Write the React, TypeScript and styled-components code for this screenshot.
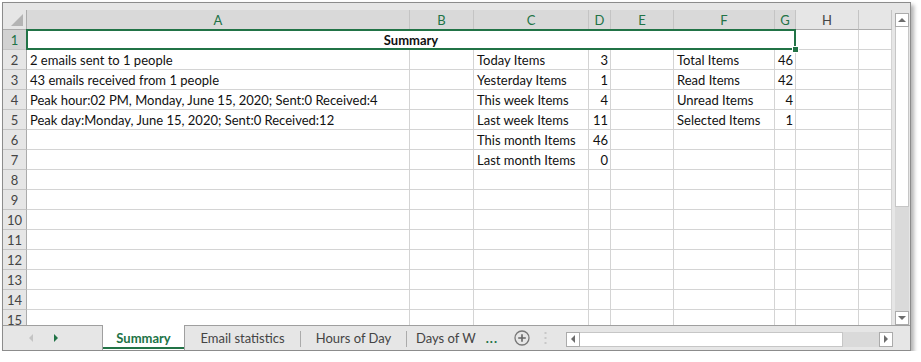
import React from "react";
import styled, { createGlobalStyle, css } from "styled-components";

const Global = createGlobalStyle`
  html, body { margin: 0; padding: 0; background: #ffffff; }
  body { font-family: Lato, "Liberation Sans", sans-serif; }
`;

const GREEN = "#217346";
const COLS = [24, 383, 64, 115, 22, 63, 101, 21, 63, 33];
const LETTERS = ["A", "B", "C", "D", "E", "F", "G", "H", ""];

const Window = styled.div`
  margin: 2px 0 0 2px;
  width: 909px;
  height: 349px;
  box-sizing: border-box;
  border: 1px solid #8c8c8c;
  background: #e6e6e6;
  box-shadow: 3px 3px 4px rgba(0, 0, 0, 0.3);
  display: flex;
  flex-direction: column;
`;

const Main = styled.div`
  display: flex;
  height: 322px;
  overflow: hidden;
`;

const Sheet = styled.div`
  width: 889px;
  display: flex;
  flex-direction: column;
  overflow: hidden;
`;

const Band = styled.div`
  height: 7px;
  flex: none;
  background: #e6e6e6;
`;

const Grid = styled.div`
  display: grid;
  grid-template-columns: ${COLS.map((c) => c + "px").join(" ")};
  grid-template-rows: 20px repeat(15, 20px);
  background: #ffffff;
`;

const Corner = styled.div`
  background: #e6e6e6;
  border-right: 1px solid #ababab;
  border-bottom: 1px solid #ababab;
  box-sizing: border-box;
  display: flex;
  align-items: flex-end;
  justify-content: flex-end;
  padding: 0 3px 3px 0;
`;

const ColHead = styled.div<{ $sel?: boolean }>`
  box-sizing: border-box;
  background: ${(p) => (p.$sel ? "#d9d9d9" : "#e6e6e6")};
  color: ${(p) => (p.$sel ? GREEN : "#444444")};
  border-right: 1px solid #c4c4c4;
  border-bottom: 1px solid #ababab;
  font-size: 13px;
  display: flex;
  align-items: center;
  justify-content: center;
  padding-top: 1px;
`;

const RowHead = styled.div<{ $sel?: boolean }>`
  box-sizing: border-box;
  background: ${(p) => (p.$sel ? "#d2d2d2" : "#e6e6e6")};
  color: ${(p) => (p.$sel ? GREEN : "#444444")};
  border-right: 1px solid #ababab;
  border-bottom: 1px solid #c4c4c4;
  font-size: 13px;
  display: flex;
  align-items: center;
  justify-content: center;
  padding-top: 1px;
`;

const Cell = styled.div<{ $right?: boolean }>`
  box-sizing: border-box;
  border-right: 1px solid #d4d4d4;
  border-bottom: 1px solid #d4d4d4;
  font-size: 13px;
  color: #111111;
  display: flex;
  align-items: center;
  white-space: nowrap;
  padding: 1px 3px 0 3px;
  ${(p) =>
    p.$right &&
    css`
      justify-content: flex-end;
      padding-right: 2px;
    `}
`;

const Merged = styled.div`
  grid-column: 2 / span 7;
  position: relative;
  box-sizing: border-box;
  border-bottom: 1px solid #d4d4d4;
  border-right: 1px solid #d4d4d4;
  font-size: 13px;
  font-weight: 700;
  color: #111111;
  display: flex;
  align-items: center;
  justify-content: center;
  padding-top: 1px;
  &::after {
    content: "";
    position: absolute;
    left: -1px;
    top: -1px;
    right: -1px;
    bottom: -1px;
    border: 2px solid ${GREEN};
  }
`;

const Handle = styled.span`
  position: absolute;
  right: -4px;
  bottom: -4px;
  width: 5px;
  height: 5px;
  background: ${GREEN};
  border: 1px solid #ffffff;
  z-index: 2;
`;

const VScroll = styled.div`
  width: 17px;
  display: flex;
  flex-direction: column;
  padding: 10px 0 0 3px;
  box-sizing: border-box;
`;

const ScrollBtn = styled.div<{ $h?: number }>`
  width: 14px;
  height: ${(p) => p.$h ?? 14}px;
  flex: none;
  box-sizing: border-box;
  border: 1px solid #ababab;
  background: #ffffff;
  display: flex;
  align-items: center;
  justify-content: center;
`;

const VTrack = styled.div`
  flex: 1;
  width: 14px;
  background: #dadada;
  display: flex;
  flex-direction: column;
`;

const VThumb = styled.div`
  height: 180px;
  box-sizing: border-box;
  background: #ffffff;
  border: 1px solid #c6c6c6;
  border-top: none;
`;

const TabBar = styled.div`
  height: 25px;
  box-sizing: border-box;
  border-top: 1px solid #9f9f9f;
  display: flex;
  align-items: stretch;
  font-size: 13px;
  color: #444444;
`;

const Nav = styled.div`
  width: 99px;
  display: flex;
  align-items: center;
  padding-left: 26px;
  gap: 21px;
  box-sizing: border-box;
`;

const Tab = styled.div<{ $active?: boolean; $w: number }>`
  width: ${(p) => p.$w}px;
  box-sizing: border-box;
  display: flex;
  align-items: center;
  justify-content: center;
  white-space: nowrap;
  ${(p) =>
    p.$active &&
    css`
      margin-top: -1px;
      background: #ffffff;
      border-left: 1px solid #9f9f9f;
      border-right: 1px solid #9f9f9f;
      color: ${GREEN};
      font-weight: 700;
      box-shadow: inset 0 -1px 0 #ffffff, inset 0 -3px 0 ${GREEN};
    `}
`;

const Sep = styled.div`
  width: 1px;
  margin: 5px 0 3px;
  background: #ababab;
`;

const More = styled.span`
  color: ${GREEN};
  font-weight: 700;
  margin-left: 10px;
  letter-spacing: 1px;
`;

const Tools = styled.div`
  display: flex;
  align-items: center;
  gap: 14px;
  padding-left: 7px;
  width: 59px;
  box-sizing: border-box;
`;

const HScroll = styled.div`
  width: 327px;
  height: 15px;
  align-self: center;
  margin-top: 2px;
  display: flex;
`;

const HThumb = styled.div`
  width: 263px;
  box-sizing: border-box;
  background: #ffffff;
  border: 1px solid #c6c6c6;
  border-left: none;
`;

const HTrack = styled.div`
  flex: 1;
  background: #dadada;
`;

const Tri = ({ dir, color, size = 4 }: { dir: "up" | "down" | "left" | "right"; color: string; size?: number }) => {
  const s = size;
  const pts =
    dir === "up"
      ? `0,${s} ${s * 2},${s} ${s},0`
      : dir === "down"
      ? `0,0 ${s * 2},0 ${s},${s}`
      : dir === "left"
      ? `${s},0 ${s},${s * 2} 0,${s}`
      : `0,0 0,${s * 2} ${s},${s}`;
  const w = dir === "up" || dir === "down" ? s * 2 : s;
  const h = dir === "up" || dir === "down" ? s : s * 2;
  return (
    <svg width={w} height={h} viewBox={`0 0 ${w} ${h}`}>
      <polygon points={pts} fill={color} />
    </svg>
  );
};

type Row = { a?: string; c?: string; d?: string; f?: string; g?: string };
const ROWS: Row[] = [
  { a: "2 emails sent to 1 people", c: "Today Items", d: "3", f: "Total Items", g: "46" },
  { a: "43 emails received from 1 people", c: "Yesterday Items", d: "1", f: "Read Items", g: "42" },
  { a: "Peak hour:02 PM, Monday, June 15, 2020; Sent:0 Received:4", c: "This week Items", d: "4", f: "Unread Items", g: "4" },
  { a: "Peak day:Monday, June 15, 2020; Sent:0 Received:12", c: "Last week Items", d: "11", f: "Selected Items", g: "1" },
  { c: "This month Items", d: "46" },
  { c: "Last month Items", d: "0" },
];

export default function App() {
  const body: React.ReactNode[] = [];
  for (let r = 2; r <= 15; r++) {
    const d = ROWS[r - 2] || {};
    body.push(<RowHead key={`h${r}`}>{r}</RowHead>);
    body.push(<Cell key={`a${r}`}>{d.a}</Cell>);
    body.push(<Cell key={`b${r}`} />);
    body.push(<Cell key={`c${r}`}>{d.c}</Cell>);
    body.push(<Cell key={`d${r}`} $right>{d.d}</Cell>);
    body.push(<Cell key={`e${r}`} />);
    body.push(<Cell key={`f${r}`}>{d.f}</Cell>);
    body.push(<Cell key={`g${r}`} $right>{d.g}</Cell>);
    body.push(<Cell key={`hh${r}`} />);
    body.push(<Cell key={`i${r}`} />);
  }

  return (
    <>
      <Global />
      <Window>
        <Main>
          <Sheet>
            <Band />
            <Grid>
              <Corner>
                <svg width="12" height="12" viewBox="0 0 12 12">
                  <polygon points="12,0 12,12 0,12" fill="#b4b4b4" />
                </svg>
              </Corner>
              {LETTERS.map((l, i) => (
                <ColHead key={i} $sel={i < 7}>
                  {l}
                </ColHead>
              ))}
              <RowHead $sel>1</RowHead>
              <Merged>
                Summary
                <Handle />
              </Merged>
              <Cell />
              <Cell />
              {body}
            </Grid>
          </Sheet>
          <VScroll>
            <ScrollBtn>
              <Tri dir="up" color="#6d6d6d" />
            </ScrollBtn>
            <VTrack>
              <VThumb />
            </VTrack>
            <ScrollBtn>
              <Tri dir="down" color="#6d6d6d" />
            </ScrollBtn>
          </VScroll>
        </Main>
        <TabBar>
          <Nav>
            <Tri dir="left" color="#c4c4c4" size={4} />
            <Tri dir="right" color={GREEN} size={4} />
          </Nav>
          <Tab $active $w={83}>Summary</Tab>
          <Tab $w={115}>Email statistics</Tab>
          <Sep />
          <Tab $w={105}>Hours of Day</Tab>
          <Sep />
          <Tab $w={100}>
            Days of W<More>...</More>
          </Tab>
          <Tools>
            <svg width="16" height="16" viewBox="0 0 16 16">
              <circle cx="8" cy="8" r="7" fill="none" stroke="#777777" strokeWidth="1.3" />
              <path d="M8 4.2v7.6M4.2 8h7.6" stroke="#666666" strokeWidth="1.6" />
            </svg>
            <svg width="3" height="12" viewBox="0 0 3 12">
              <rect x="0.5" y="0" width="2" height="2" fill="#c8c8c8" />
              <rect x="0.5" y="5" width="2" height="2" fill="#c8c8c8" />
              <rect x="0.5" y="10" width="2" height="2" fill="#c8c8c8" />
            </svg>
          </Tools>
          <HScroll>
            <ScrollBtn $h={15}>
              <Tri dir="left" color="#6d6d6d" />
            </ScrollBtn>
            <HThumb />
            <HTrack />
            <ScrollBtn $h={15}>
              <Tri dir="right" color="#6d6d6d" />
            </ScrollBtn>
          </HScroll>
        </TabBar>
      </Window>
    </>
  );
}
